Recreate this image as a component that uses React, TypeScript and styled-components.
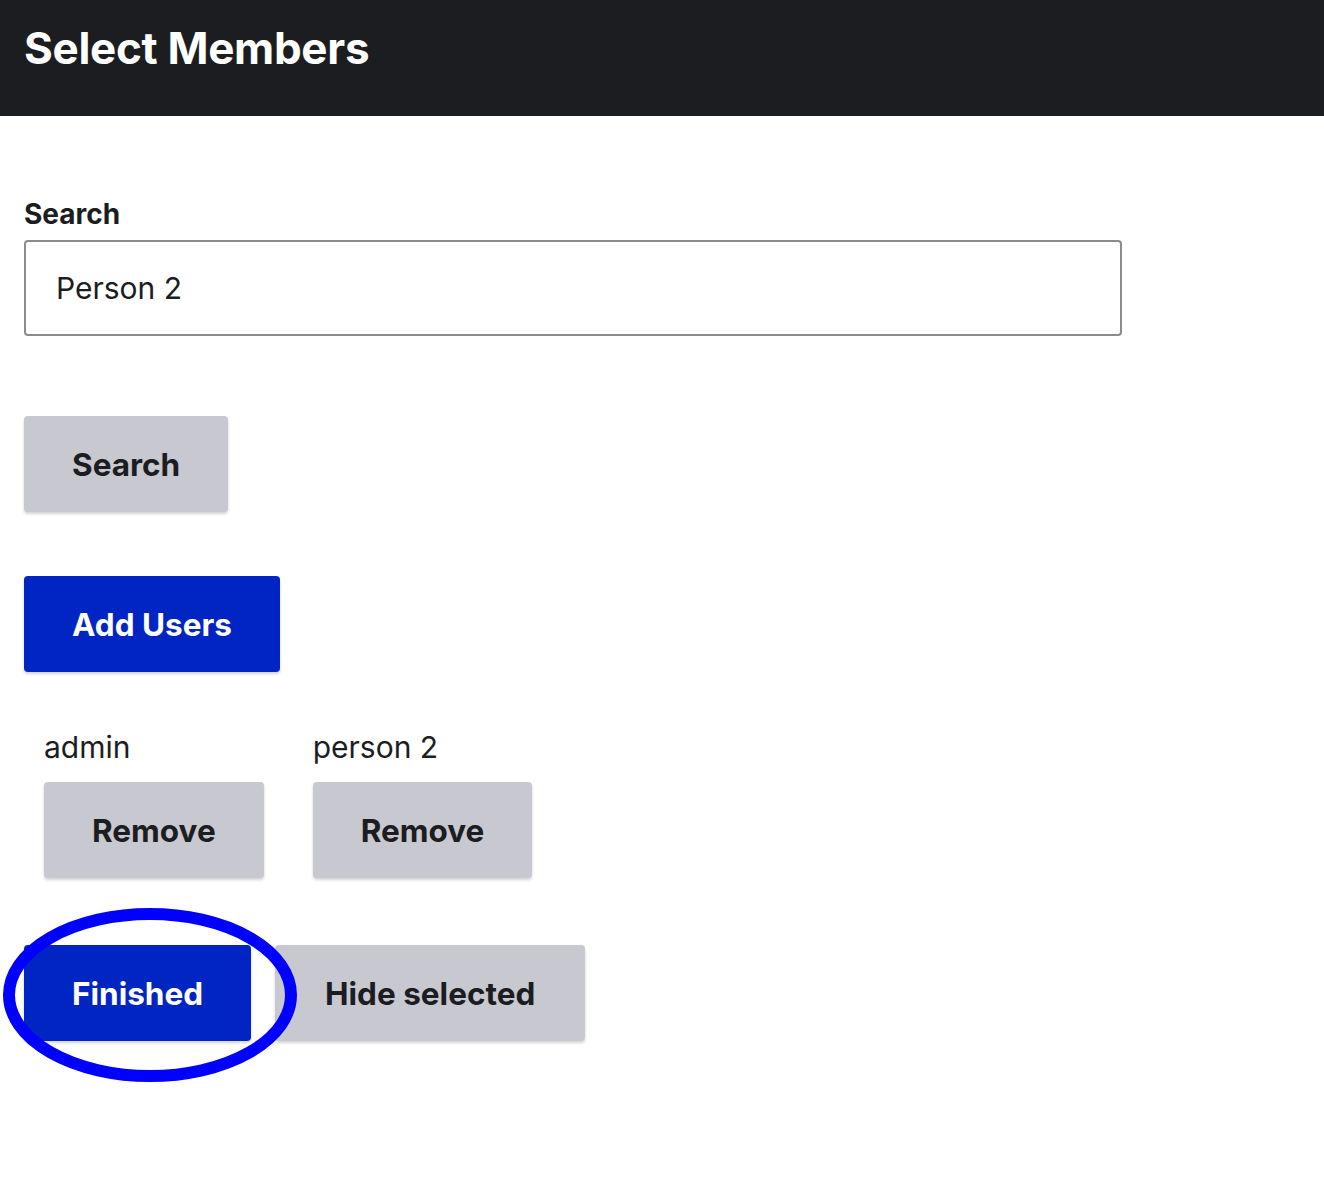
import React from "react";
import styled, { createGlobalStyle } from "styled-components";

const Global = createGlobalStyle`
  html, body { margin: 0; padding: 0; background: #ffffff; }
  body { font-family: Inter, "Liberation Sans", Arial, sans-serif; color: #1c1d21; }
`;

const Header = styled.header`
  height: 116px;
  background: #1c1d21;
  box-sizing: border-box;
  padding: 21px 24px 0;
`;

const Title = styled.h1`
  margin: 0;
  font-size: 44px;
  line-height: 54px;
  font-weight: 700;
  color: #ffffff;
  letter-spacing: -0.3px;
`;

const Main = styled.main`
  padding: 80px 24px 160px;
  display: flex;
  flex-direction: column;
  align-items: flex-start;
`;

const Label = styled.label`
  font-size: 28px;
  font-weight: 700;
  line-height: 36px;
  margin-bottom: 8px;
`;

const Input = styled.input`
  box-sizing: border-box;
  width: 1098px;
  height: 96px;
  border: 2px solid #8b8b90;
  border-radius: 4px;
  padding: 0 30px;
  font-family: inherit;
  font-size: 30px;
  color: #1c1d21;
  outline: none;
`;

const Button = styled.button<{ $primary?: boolean }>`
  box-sizing: border-box;
  height: 96px;
  padding: 0 48px;
  border: none;
  border-radius: 4px;
  background: ${(p) => (p.$primary ? "#0025c2" : "#c8c8d0")};
  color: ${(p) => (p.$primary ? "#ffffff" : "#1c1d21")};
  font-family: inherit;
  font-size: 31.5px;
  font-weight: 700;
  box-shadow: 0 2px 3px rgba(0, 0, 0, 0.18);
  cursor: pointer;
  white-space: nowrap;
`;

const SearchButton = styled(Button)`
  margin-top: 80px;
`;

const AddButton = styled(Button)`
  margin-top: 64px;
`;

const Members = styled.div`
  display: flex;
  gap: 49px;
  padding-left: 20px;
  margin-top: 58px;
`;

const Member = styled.div`
  display: flex;
  flex-direction: column;
  align-items: flex-start;
  gap: 18px;
`;

const MemberName = styled.span`
  font-size: 30px;
  line-height: 34px;
`;

const Actions = styled.div`
  position: relative;
  display: flex;
  gap: 24px;
  margin-top: 67px;
`;

const WideButton = styled(Button)`
  padding: 0 50px;
`;

const Annotation = styled.svg`
  position: absolute;
  left: -24px;
  top: -40px;
  overflow: visible;
  pointer-events: none;
`;

export default function App() {
  return (
    <>
      <Global />
      <Header>
        <Title>Select Members</Title>
      </Header>
      <Main>
        <Label htmlFor="search">Search</Label>
        <Input id="search" defaultValue="Person 2" />
        <SearchButton>Search</SearchButton>
        <AddButton $primary>Add Users</AddButton>
        <Members>
          <Member>
            <MemberName>admin</MemberName>
            <Button>Remove</Button>
          </Member>
          <Member>
            <MemberName>person 2</MemberName>
            <Button>Remove</Button>
          </Member>
        </Members>
        <Actions>
          <Button $primary>Finished</Button>
          <WideButton>Hide selected</WideButton>
          <Annotation width="320" height="190" viewBox="0 0 320 190">
            <ellipse cx="150" cy="90" rx="141" ry="81" fill="none" stroke="#0000ff" strokeWidth="12" />
          </Annotation>
        </Actions>
      </Main>
    </>
  );
}
